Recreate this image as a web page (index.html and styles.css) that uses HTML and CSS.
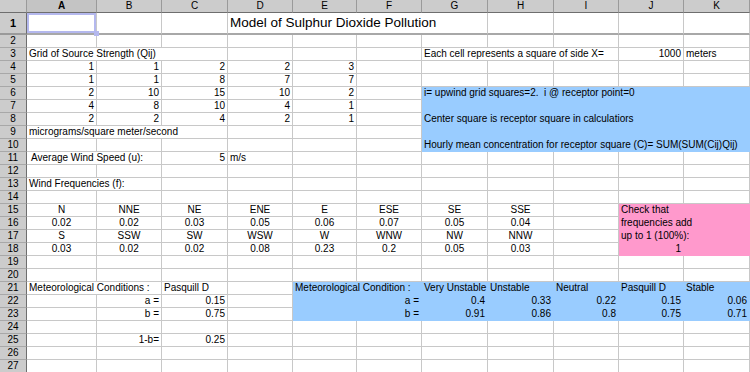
FILE: index.html
```html
<!DOCTYPE html>
<html>
<head>
<meta charset="utf-8">
<title>Model of Sulphur Dioxide Pollution</title>
<link rel="stylesheet" href="styles.css">
</head>
<body>
<div class="sheet">
  <!-- column headers -->
  <div class="corner"></div>
  <div class="ch sel-h">A</div><div class="ch">B</div><div class="ch">C</div><div class="ch">D</div><div class="ch">E</div><div class="ch">F</div><div class="ch">G</div><div class="ch">H</div><div class="ch">I</div><div class="ch">J</div><div class="ch">K</div>

  <!-- row 1 -->
  <div class="rh r1 sel-h">1</div>
  <div class="cell r1 sel"></div><div class="cell r1"></div><div class="cell r1"></div>
  <div class="cell r1 title s4">Model of Sulphur Dioxide Pollution</div>
  <div class="cell r1"></div><div class="cell r1"></div><div class="cell r1"></div><div class="cell r1"></div>

  <!-- row 2 -->
  <div class="rh">2</div>
  <div class="cell"></div><div class="cell"></div><div class="cell"></div><div class="cell"></div><div class="cell"></div><div class="cell"></div><div class="cell"></div><div class="cell"></div><div class="cell"></div><div class="cell"></div><div class="cell"></div>

  <!-- row 3 -->
  <div class="rh">3</div>
  <div class="cell s3">Grid of Source Strength (Qij)</div><div class="cell"></div><div class="cell"></div><div class="cell"></div>
  <div class="cell s3">Each cell represents a square of side X=</div><div class="cell r">1000</div><div class="cell">meters</div>

  <!-- row 4 -->
  <div class="rh">4</div>
  <div class="cell r">1</div><div class="cell r">1</div><div class="cell r">2</div><div class="cell r">2</div><div class="cell r">3</div>
  <div class="cell"></div><div class="cell"></div><div class="cell"></div><div class="cell"></div><div class="cell"></div><div class="cell"></div>

  <!-- row 5 -->
  <div class="rh">5</div>
  <div class="cell r">1</div><div class="cell r">1</div><div class="cell r">8</div><div class="cell r">7</div><div class="cell r">7</div>
  <div class="cell"></div><div class="cell"></div><div class="cell"></div><div class="cell"></div><div class="cell"></div><div class="cell"></div>

  <!-- row 6 -->
  <div class="rh">6</div>
  <div class="cell r">2</div><div class="cell r">10</div><div class="cell r">15</div><div class="cell r">10</div><div class="cell r">2</div>
  <div class="cell"></div>
  <div class="cell blue s5">i= upwind grid squares=2.&nbsp; i @ receptor point=0</div>

  <!-- row 7 -->
  <div class="rh">7</div>
  <div class="cell r">4</div><div class="cell r">8</div><div class="cell r">10</div><div class="cell r">4</div><div class="cell r">1</div>
  <div class="cell"></div>
  <div class="cell blue s5"></div>

  <!-- row 8 -->
  <div class="rh">8</div>
  <div class="cell r">2</div><div class="cell r">2</div><div class="cell r">4</div><div class="cell r">2</div><div class="cell r">1</div>
  <div class="cell"></div>
  <div class="cell blue s5">Center square is receptor square in calculatiors</div>

  <!-- row 9 -->
  <div class="rh">9</div>
  <div class="cell s3">micrograms/square meter/second</div><div class="cell"></div><div class="cell"></div><div class="cell"></div>
  <div class="cell blue s5"></div>

  <!-- row 10 -->
  <div class="rh">10</div>
  <div class="cell"></div><div class="cell"></div><div class="cell"></div><div class="cell"></div><div class="cell"></div><div class="cell"></div>
  <div class="cell blue s5">Hourly mean concentration for receptor square (C)= SUM(SUM(Cij)Qij)</div>

  <!-- row 11 -->
  <div class="rh">11</div>
  <div class="cell s2 ind">Average Wind Speed (u):</div><div class="cell r">5</div><div class="cell">m/s</div>
  <div class="cell"></div><div class="cell"></div><div class="cell"></div><div class="cell"></div><div class="cell"></div><div class="cell"></div><div class="cell"></div>

  <!-- row 12 -->
  <div class="rh">12</div>
  <div class="cell"></div><div class="cell"></div><div class="cell"></div><div class="cell"></div><div class="cell"></div><div class="cell"></div><div class="cell"></div><div class="cell"></div><div class="cell"></div><div class="cell"></div><div class="cell"></div>

  <!-- row 13 -->
  <div class="rh">13</div>
  <div class="cell s2">Wind Frequencies (f):</div>
  <div class="cell"></div><div class="cell"></div><div class="cell"></div><div class="cell"></div><div class="cell"></div><div class="cell"></div><div class="cell"></div><div class="cell"></div><div class="cell"></div>

  <!-- row 14 -->
  <div class="rh">14</div>
  <div class="cell"></div><div class="cell"></div><div class="cell"></div><div class="cell"></div><div class="cell"></div><div class="cell"></div><div class="cell"></div><div class="cell"></div><div class="cell"></div><div class="cell"></div><div class="cell"></div>

  <!-- row 15 -->
  <div class="rh">15</div>
  <div class="cell c">N</div><div class="cell c">NNE</div><div class="cell c">NE</div><div class="cell c">ENE</div><div class="cell c">E</div><div class="cell c">ESE</div><div class="cell c">SE</div><div class="cell c">SSE</div>
  <div class="cell"></div>
  <div class="cell pink s2">Check that</div>

  <!-- row 16 -->
  <div class="rh">16</div>
  <div class="cell c">0.02</div><div class="cell c">0.02</div><div class="cell c">0.03</div><div class="cell c">0.05</div><div class="cell c">0.06</div><div class="cell c">0.07</div><div class="cell c">0.05</div><div class="cell c">0.04</div>
  <div class="cell"></div>
  <div class="cell pink s2">frequencies add</div>

  <!-- row 17 -->
  <div class="rh">17</div>
  <div class="cell c">S</div><div class="cell c">SSW</div><div class="cell c">SW</div><div class="cell c">WSW</div><div class="cell c">W</div><div class="cell c">WNW</div><div class="cell c">NW</div><div class="cell c">NNW</div>
  <div class="cell"></div>
  <div class="cell pink s2">up to 1 (100%):</div>

  <!-- row 18 -->
  <div class="rh">18</div>
  <div class="cell c">0.03</div><div class="cell c">0.02</div><div class="cell c">0.02</div><div class="cell c">0.08</div><div class="cell c">0.23</div><div class="cell c">0.2</div><div class="cell c">0.05</div><div class="cell c">0.03</div>
  <div class="cell"></div>
  <div class="cell pink r">1</div><div class="cell pink"></div>

  <!-- row 19 -->
  <div class="rh">19</div>
  <div class="cell"></div><div class="cell"></div><div class="cell"></div><div class="cell"></div><div class="cell"></div><div class="cell"></div><div class="cell"></div><div class="cell"></div><div class="cell"></div><div class="cell"></div><div class="cell"></div>

  <!-- row 20 -->
  <div class="rh">20</div>
  <div class="cell"></div><div class="cell"></div><div class="cell"></div><div class="cell"></div><div class="cell"></div><div class="cell"></div><div class="cell"></div><div class="cell"></div><div class="cell"></div><div class="cell"></div><div class="cell"></div>

  <!-- row 21 -->
  <div class="rh">21</div>
  <div class="cell s2">Meteorological Conditions :</div><div class="cell">Pasquill D</div><div class="cell"></div>
  <div class="cell blue s2">Meteorological Condition :</div><div class="cell blue">Very Unstable</div><div class="cell blue">Unstable</div><div class="cell blue">Neutral</div><div class="cell blue">Pasquill D</div><div class="cell blue">Stable</div>

  <!-- row 22 -->
  <div class="rh">22</div>
  <div class="cell"></div><div class="cell r">a =</div><div class="cell r">0.15</div><div class="cell"></div>
  <div class="cell blue"></div><div class="cell blue r">a =</div><div class="cell blue r">0.4</div><div class="cell blue r">0.33</div><div class="cell blue r">0.22</div><div class="cell blue r">0.15</div><div class="cell blue r">0.06</div>

  <!-- row 23 -->
  <div class="rh">23</div>
  <div class="cell"></div><div class="cell r">b =</div><div class="cell r">0.75</div><div class="cell"></div>
  <div class="cell blue"></div><div class="cell blue r">b =</div><div class="cell blue r">0.91</div><div class="cell blue r">0.86</div><div class="cell blue r">0.8</div><div class="cell blue r">0.75</div><div class="cell blue r">0.71</div>

  <!-- row 24 -->
  <div class="rh">24</div>
  <div class="cell"></div><div class="cell"></div><div class="cell"></div><div class="cell"></div><div class="cell"></div><div class="cell"></div><div class="cell"></div><div class="cell"></div><div class="cell"></div><div class="cell"></div><div class="cell"></div>

  <!-- row 25 -->
  <div class="rh">25</div>
  <div class="cell"></div><div class="cell r">1-b=</div><div class="cell r">0.25</div>
  <div class="cell"></div><div class="cell"></div><div class="cell"></div><div class="cell"></div><div class="cell"></div><div class="cell"></div><div class="cell"></div><div class="cell"></div>

  <!-- row 26 -->
  <div class="rh">26</div>
  <div class="cell"></div><div class="cell"></div><div class="cell"></div><div class="cell"></div><div class="cell"></div><div class="cell"></div><div class="cell"></div><div class="cell"></div><div class="cell"></div><div class="cell"></div><div class="cell"></div>

  <!-- row 27 -->
  <div class="rh">27</div>
  <div class="cell"></div><div class="cell"></div><div class="cell"></div><div class="cell"></div><div class="cell"></div><div class="cell"></div><div class="cell"></div><div class="cell"></div><div class="cell"></div><div class="cell"></div><div class="cell"></div>
</div>
</body>
</html>
```

FILE: styles.css
```css
html, body {
  margin: 0;
  padding: 0;
  background: #ffffff;
  overflow: hidden;
}

.sheet {
  display: grid;
  grid-template-columns: 27px 70px 65px 66px 65px 64px 65px 66px 66px 65px 65px 66px;
  grid-template-rows: 13px 22px;
  grid-auto-rows: 13px;
  width: 750px;
  font-family: "Liberation Sans", Arial, sans-serif;
  font-size: 10px;
  color: #000;
}

.corner,
.ch {
  box-sizing: border-box;
  background: #cccccc;
  border-right: 1px solid #9a9a9a;
  border-bottom: 1px solid #6e6e6e;
  text-align: center;
  line-height: 12px;
}

.ch.sel-h {
  font-weight: bold;
  background: #c4c4c4;
}

.rh {
  box-sizing: border-box;
  background: #cccccc;
  border-right: 1px solid #6e6e6e;
  border-bottom: 1px solid #a8a8a8;
  text-align: center;
  line-height: 12px;
}

.rh.r1 {
  font-weight: bold;
  font-size: 11px;
  line-height: 20px;
  border-bottom: 2px solid #9a9a9a;
}

.cell {
  box-sizing: border-box;
  border-right: 1px solid #c8c8c8;
  border-bottom: 1px solid #c8c8c8;
  padding: 0 2px;
  line-height: 12px;
  white-space: nowrap;
  overflow: hidden;
}

.cell.r1 {
  border-bottom: 2px solid #a8a8a8;
}

.cell.sel {
  position: relative;
  overflow: visible;
  box-shadow: inset 0 0 0 2px #b4b8ee;
}

.cell.sel::after {
  content: "";
  position: absolute;
  right: -3px;
  bottom: -3px;
  width: 5px;
  height: 5px;
  background: #b4b8ee;
}

.title {
  font-size: 13.5px;
  line-height: 20px;
  padding-left: 2px;
}

.s2 { grid-column: span 2; }
.s3 { grid-column: span 3; }
.s4 { grid-column: span 4; }
.s5 { grid-column: span 5; }

.r { text-align: right; }
.c { text-align: center; }
.ind { padding-left: 4px; }

.blue {
  background: #99ccff;
  border-color: #99ccff;
}

.pink {
  background: #ff99cc;
  border-color: #ff99cc;
}
```
